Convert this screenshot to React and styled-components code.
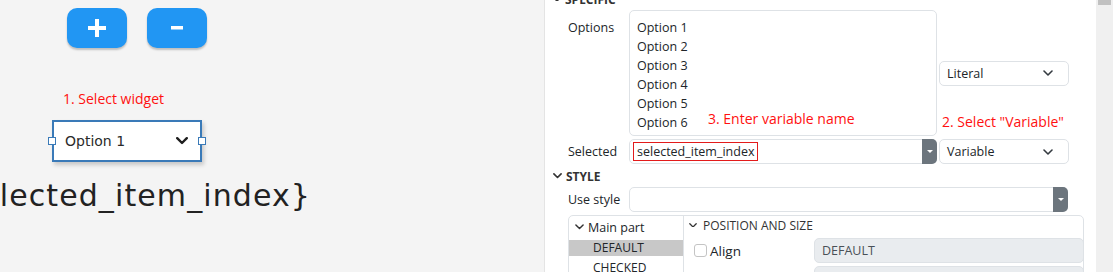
import React from "react";
import styled, { createGlobalStyle } from "styled-components";

const GlobalStyle = createGlobalStyle`
  html, body {
    margin: 0;
    padding: 0;
    background: #f4f4f4;
    overflow: hidden;
  }
`;

const OPTIONS = ["Option 1", "Option 2", "Option 3", "Option 4", "Option 5", "Option 6"];

function Chevron({ size = 10, stroke = "#343a40", width = 1.6 }) {
  return (
    <svg width={size} height={size * 0.6} viewBox="0 0 10 6" fill="none">
      <path d="M1 1l4 4 4-4" stroke={stroke} strokeWidth={width} strokeLinecap="round" strokeLinejoin="round" />
    </svg>
  );
}

function App() {
  return (
    <>
      <GlobalStyle />
      <Screen>
        <Canvas>
          <CanvasButton $left={67}>
            <svg width="22" height="22" viewBox="0 0 22 22">
              <path d="M11 2v18M2 11h18" stroke="#fff" strokeWidth="4" />
            </svg>
          </CanvasButton>
          <CanvasButton $left={147}>
            <svg width="12" height="4" viewBox="0 0 12 4">
              <rect width="12" height="3.5" fill="#fff" />
            </svg>
          </CanvasButton>
          <Note $left={63} $top={90}>1. Select widget</Note>
          <Widget>
            <span>Option 1</span>
            <Chevron size={12} stroke="#1e1e1e" width={2} />
            <Handle $side="left" />
            <Handle $side="right" />
          </Widget>
          <BigLabel>
            <span>{"{selected_item_index}"}</span>
          </BigLabel>
        </Canvas>

        <Panel>
          <PanelInner>
            <GroupHeader>
              <Chevron size={8} stroke="#333" width={1.8} />
              SPECIFIC
            </GroupHeader>

            <PropRow>
              <PropLabel $top={8}>Options</PropLabel>
              <TextArea>
                {OPTIONS.map((o) => (
                  <div key={o}>{o}</div>
                ))}
                <Note $left={78} $top={99}>3. Enter variable name</Note>
              </TextArea>
              <Side>
                <Select>
                  Literal
                  <Chevron />
                </Select>
                <Note $left={5} $top={103}>2. Select "Variable"</Note>
              </Side>
            </PropRow>

            <PropRow>
              <PropLabel $top={3}>Selected</PropLabel>
              <Combo>
                <Marked>selected_item_index</Marked>
                <ComboButton>
                  <Caret />
                </ComboButton>
              </Combo>
              <Side>
                <Select>
                  Variable
                  <Chevron />
                </Select>
              </Side>
            </PropRow>

            <GroupHeader $gap>
              <Chevron size={9} stroke="#333" width={1.8} />
              STYLE
            </GroupHeader>

            <PropRow>
              <PropLabel $top={3}>Use style</PropLabel>
              <Combo $wide>
                <span />
                <ComboButton>
                  <Caret />
                </ComboButton>
              </Combo>
            </PropRow>

            <StyleBox>
              <PartList>
                <PartHead>
                  <Chevron size={9} stroke="#333" width={1.6} />
                  Main part
                </PartHead>
                <PartState $active>DEFAULT</PartState>
                <PartState>CHECKED</PartState>
              </PartList>
              <StyleProps>
                <SubHeader>
                  <Chevron size={8} stroke="#333" width={1.6} />
                  POSITION AND SIZE
                </SubHeader>
                <StyleRow>
                  <Check />
                  <span>Align</span>
                  <ReadOnly>DEFAULT</ReadOnly>
                </StyleRow>
                <StyleRow>
                  <Check />
                  <span />
                  <ReadOnly />
                </StyleRow>
              </StyleProps>
            </StyleBox>
          </PanelInner>
        </Panel>

        <Scrollbar>
          <Thumb />
        </Scrollbar>
      </Screen>
    </>
  );
}

export default App;

const Screen = styled.div`
  display: grid;
  grid-template-columns: 544px 552px 17px;
  width: 1113px;
  height: 272px;
  overflow: hidden;
`;

const Canvas = styled.div`
  position: relative;
  background: #f4f4f4;
  overflow: hidden;
`;

const CanvasButton = styled.div`
  position: absolute;
  left: ${(p) => p.$left}px;
  top: 8px;
  width: 60px;
  height: 40px;
  border-radius: 10px;
  background: #2196f3;
  box-shadow: 0 2px 2px rgba(0, 0, 0, 0.22);
  display: flex;
  align-items: center;
  justify-content: center;
`;

const Note = styled.div`
  position: absolute;
  left: ${(p) => p.$left}px;
  top: ${(p) => p.$top}px;
  color: #ff1010;
  font-family: "Open Sans", sans-serif;
  font-size: 14px;
  line-height: 18px;
  white-space: nowrap;
`;

const Widget = styled.div`
  position: absolute;
  left: 52px;
  top: 120px;
  width: 150px;
  height: 42px;
  box-sizing: border-box;
  border: 2px solid #3a7ab8;
  background: #fff;
  box-shadow: 2px 3px 4px rgba(0, 0, 0, 0.18);
  display: flex;
  align-items: center;
  justify-content: space-between;
  padding: 0 12px 0 11px;
  font-family: "DejaVu Sans", sans-serif;
  font-size: 14px;
  color: #2a2a2a;
`;

const Handle = styled.div`
  position: absolute;
  top: 15px;
  ${(p) => (p.$side === "left" ? "left: -6px;" : "right: -6px;")}
  width: 6px;
  height: 6px;
  background: #fff;
  border: 1px solid #3a7ab8;
`;

const BigLabel = styled.div`
  position: absolute;
  left: 0;
  top: 178px;
  width: 311px;
  display: flex;
  justify-content: flex-end;
  font-family: "DejaVu Sans", sans-serif;
  font-size: 30px;
  line-height: 35px;
  letter-spacing: 1.1px;
  color: #222;
  white-space: nowrap;
`;

const Panel = styled.div`
  background: #fff;
  border-left: 1px solid #e4e4e4;
  overflow: hidden;
  font-family: "Open Sans", sans-serif;
  font-size: 12.5px;
  color: #212529;
`;

const PanelInner = styled.div`
  margin-top: -10px;
  padding-left: 8px;
`;

const GroupHeader = styled.div`
  display: flex;
  align-items: center;
  gap: 4px;
  height: 18px;
  margin: ${(p) => (p.$gap ? "3px 0 2px" : "0 0 2px")};
  font-weight: 700;
  font-size: 12px;
  color: #333;
`;

const PropRow = styled.div`
  display: grid;
  grid-template-columns: 61px 308px 132px;
  padding-left: 15px;
  margin-bottom: 3px;
`;

const PropLabel = styled.div`
  padding-top: ${(p) => p.$top}px;
  line-height: 19px;
  color: #212529;
`;

const TextArea = styled.div`
  position: relative;
  box-sizing: border-box;
  height: 126px;
  border: 1px solid #dee2e6;
  border-radius: 5px;
  padding: 7px 7px 6px;
  line-height: 19px;
`;

const Side = styled.div`
  position: relative;
  display: flex;
  align-items: center;
  padding-left: 2px;
`;

const Select = styled.div`
  box-sizing: border-box;
  width: 130px;
  height: 25px;
  border: 1px solid #dee2e6;
  border-radius: 5px;
  display: flex;
  align-items: center;
  justify-content: space-between;
  padding: 0 15px 0 7px;
`;

const Combo = styled.div`
  box-sizing: border-box;
  height: 25px;
  border: 1px solid #dee2e6;
  border-radius: 5px;
  display: flex;
  align-items: center;
  justify-content: space-between;
  padding-left: 3px;
  ${(p) => p.$wide && "grid-column: 2 / 4; margin-right: 1px;"}
`;

const Marked = styled.span`
  box-sizing: border-box;
  height: 19px;
  line-height: 17px;
  border: 1px solid #e31b1b;
  padding: 0 3px 0 3px;
`;

const ComboButton = styled.div`
  align-self: stretch;
  width: 15px;
  margin: -1px -1px -1px 0;
  background: #6c757d;
  border-radius: 0 5px 5px 0;
  display: flex;
  align-items: center;
  justify-content: center;
`;

const Caret = styled.div`
  width: 0;
  height: 0;
  border-left: 3px solid transparent;
  border-right: 3px solid transparent;
  border-top: 3px solid #fff;
`;

const StyleBox = styled.div`
  display: grid;
  grid-template-columns: 115px 1fr;
  margin: 1px 12px 0 15px;
  height: 80px;
  border: 1px solid #dee2e6;
  border-radius: 5px;
`;

const PartList = styled.div`
  border-right: 1px solid #dee2e6;
`;

const PartHead = styled.div`
  display: flex;
  align-items: center;
  gap: 4px;
  height: 22px;
  padding-left: 6px;
  margin-bottom: 2px;
`;

const PartState = styled.div`
  height: 16px;
  line-height: 16px;
  padding-left: 24px;
  margin-bottom: 4px;
  font-size: 12px;
  background: ${(p) => (p.$active ? "#c8c8c8" : "transparent")};
`;

const StyleProps = styled.div`
  display: flex;
  flex-direction: column;
`;

const SubHeader = styled.div`
  display: flex;
  align-items: center;
  gap: 6px;
  height: 18px;
  padding-left: 5px;
  margin-bottom: 4px;
  font-size: 12px;
  color: #333;
`;

const StyleRow = styled.div`
  display: grid;
  grid-template-columns: 16px 104px 1fr;
  align-items: center;
  padding-left: 10px;
  margin-bottom: 3px;
  font-size: 13.5px;
`;

const Check = styled.div`
  width: 11px;
  height: 11px;
  border: 1px solid #c4c4c4;
  border-radius: 3px;
  background: #fff;
`;

const ReadOnly = styled.div`
  box-sizing: border-box;
  height: 25px;
  margin-right: -1px;
  border: 1px solid #dee2e6;
  border-radius: 5px;
  background: #e9ecef;
  padding-left: 7px;
  line-height: 23px;
  font-size: 12.5px;
  color: #495057;
`;

const Scrollbar = styled.div`
  background: #f0f0f0;
  padding: 0 2px;
`;

const Thumb = styled.div`
  height: 5px;
  background: #c1c1c1;
`;
